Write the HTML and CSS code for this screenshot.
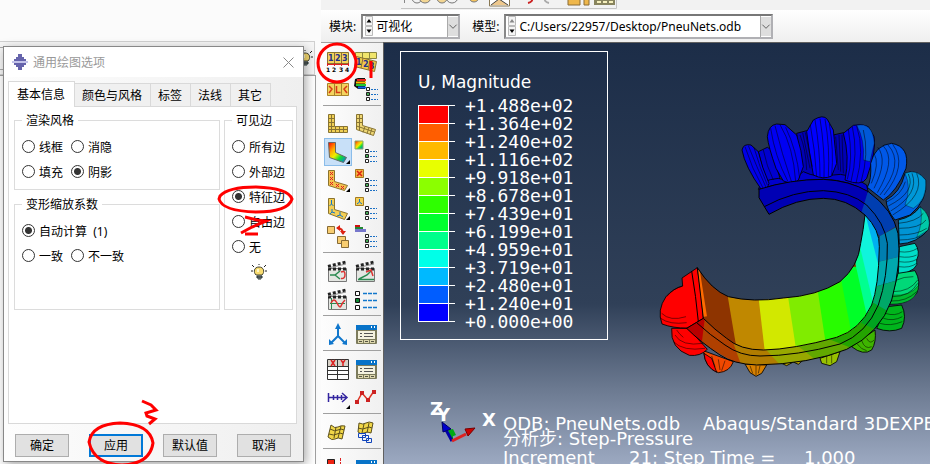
FILE: index.html
```html
<!DOCTYPE html>
<html lang="zh-CN">
<head>
    <meta charset="UTF-8">
    <meta name="viewport" content="width=device-width, initial-scale=1.0">
    <title>Abaqus/CAE</title>
    <link rel="stylesheet" href="styles.css">
</head>
<body>
    <!-- shared icon parts -->
    <svg class="defs" width="0" height="0">
        <symbol id="bulb" viewBox="0 0 16 16">
            <path d="M1 1l2 2M15 1l-2 2M8 0v1M0 7h2M14 7h2" stroke="#222" fill="none"/>
            <path d="M5 11C2 8 3 3 8 3s6 5 3 8z" fill="#f8dc70" stroke="#443"/>
            <path d="M6 5h2v3H6z" fill="#fff8c8"/>
            <path d="M6 12h5v2H6zM7 15h3" fill="#777" stroke="#233"/>
        </symbol>
        <symbol id="opts" viewBox="0 0 12 14">
            <path d="M.5 .5h3v3h-3zM.5 10.5h3v3h-3z" fill="#fff" stroke="#222"/>
            <path d="M.5 5.5h3v3h-3z" fill="#4a5" stroke="#222"/>
            <path d="M5 2.5h7M5 7.5h7M5 12.5h7" stroke="#1a6fc4" stroke-dasharray="2 1"/>
        </symbol>
        <symbol id="clap" viewBox="0 0 24 24">
            <path d="M3.500 9.500h18v13h-18z" fill="#e4e6e2" stroke="#777"/>
            <path d="M3 7.500L21 3M3 10h19" stroke="#222" stroke-width="3" stroke-dasharray="3 2"/>
            <path d="M3 9L21 5" stroke="#888"/>
        </symbol>
        <symbol id="win" viewBox="0 0 24 24">
            <rect x="2" y="3" width="21" height="19" rx="1" fill="#7c7b5c"/>
            <path d="M2 3h21v5H2z" fill="#0873c8"/>
            <path d="M17 5h1M20 5h1" stroke="#fff" stroke-width="2"/>
            <path d="M4 9h17v8H4z" fill="#f4f2df"/>
            <path d="M6 11.500h2M6 14.500h2M10 11.500h9M10 14.500h9" stroke="#555"/>
            <path d="M4 18h5v3H4zM10 18h5v3h-5zM16 18h5v3h-5z" fill="#ddd7ad"/>
            <path d="M5 19.500h3M11 19.500h3M17 19.500h3" stroke="#554"/>
        </symbol>
        <symbol id="mesh" viewBox="0 0 24 24">
            <path d="M3.500 3.500h6v12h13v6h-19z" fill="#f0cf54" stroke="#887433"/>
            <path d="M6.500 3.500v18M3.500 7.500h6M3.500 11.500h6M3.500 15.500h6M3.500 18.500h19M10.500 15.500v6M14.500 15.500v6M18.500 15.500v6" stroke="#887433" fill="none"/>
        </symbol>
        <linearGradient id="rainbow" x1="0" y1="0" x2="1" y2="1">
            <stop offset="0" stop-color="#f00"/>
            <stop offset=".3" stop-color="#fa0"/>
            <stop offset=".5" stop-color="#ee0"/>
            <stop offset=".7" stop-color="#1d3"/>
            <stop offset="1" stop-color="#06f"/>
        </linearGradient>
    </svg>

    <div class="app">
        <div class="side">
            <div class="side-bar">
                <span class="side-field"></span>
                <svg class="bulb" width="16" height="16"><use href="#bulb"/></svg>
            </div>
            <div class="side-tree"></div>
        </div>

        <div class="work">
            <div class="toolbar">
                <svg width="216" height="10" viewBox="0 0 216 10">
                    <path d="M0 8.500h215.500V0" fill="none" stroke="#c4c4c4"/>
                    <g fill="#f2f2f2" stroke="#777">
                        <circle cx="16" cy="-2" r="5"/><circle cx="24" cy="-3" r="6" fill="#f3d693"/>
                        <circle cx="41" cy="-2" r="5" fill="#f3d693"/><circle cx="51" cy="-3" r="6"/>
                        <circle cx="73" cy="-3" r="5" fill="#f5c35c"/>
                    </g>
                    <path d="M3.500 0v3" stroke="#888"/>
                    <path d="M88.500-2h20v8h-20z" fill="#fff" stroke="#887854"/>
                    <path d="M90 5l8-6 9 6" fill="#eec88d" stroke="#444"/>
                    <path d="M127 3q5-1 4-5" fill="none" stroke="#c22" stroke-width="2"/>
                    <path d="M148 3q-5-1-4-5" fill="none" stroke="#aaa" stroke-width="2"/>
                    <path d="M167-1h12v6h-12zM183-1h5v6h-5z" fill="#efb74b" stroke="#8b6c36"/>
                    <path d="M193-1h21v6h-21z" fill="#88845e"/>
                    <path d="M196 2h4M202 2h4M208 2h4" stroke="#f6f0bd" stroke-width="2"/>
                </svg>
            </div>

            <div class="context">
                <label for="module">模块:</label>
                <div class="combo combo-module">
                    <svg class="stepper" width="8" height="20" viewBox="0 0 8 20"><path d="M.5 .5h7v9h-7zM.5 10.500h7v9h-7z" fill="#f4f4f4" stroke="#bbb"/><path d="M1.500 6.500L4 3l2.500 3.500zM1.500 13.500L4 17l2.500-3.500z"/></svg>
                    <select id="module"><option>可视化</option></select>
                    <svg class="arrow" width="11" height="21" viewBox="0 0 11 21"><path d="M0 0h11v21H0z" fill="#dedede"/><path d="M1.500 8.500l4 4 4-4" fill="none" stroke="#555"/></svg>
                </div>
                <label for="model">模型:</label>
                <div class="combo combo-model">
                    <svg class="stepper" width="8" height="20" viewBox="0 0 8 20"><path d="M.5 .5h7v9h-7zM.5 10.500h7v9h-7z" fill="#f4f4f4" stroke="#bbb"/><path d="M1.500 6.500L4 3l2.500 3.500z" fill="#888"/><path d="M1.500 13.500L4 17l2.500-3.500z"/></svg>
                    <select id="model"><option>C:/Users/22957/Desktop/PneuNets.odb</option></select>
                    <svg class="arrow" width="11" height="21" viewBox="0 0 11 21"><path d="M0 0h11v21H0z" fill="#dedede"/><path d="M1.500 8.500l4 4 4-4" fill="none" stroke="#555"/></svg>
                </div>
            </div>

            <div class="main">
                <div class="toolbox">
                    <div class="tools">
                        <button class="tool" type="button" aria-label="图1">
                            <svg viewBox="0 0 24 24"><path d="M1.500 3.500h21v11h-21z" fill="#f4d35e" stroke="#8b742f"/><path d="M8.500 3v11M15.500 3v11" stroke="#8b742f"/><path d="M1 15.500h22M1.500 14v3M8.500 14v3M15.500 14v3M22.500 14v3" stroke="#d22"/><g class="num" fill="#24308c"><text x="2" y="12">1</text><text x="9" y="12">2</text><text x="16" y="12">3</text></g><g class="num-s"><text x="0" y="23">1</text><text x="6" y="23">2</text><text x="13" y="23">3</text><text x="19" y="23">4</text></g></svg>
                        </button>
                        <button class="tool" type="button" aria-label="图2">
                            <svg viewBox="0 0 24 24"><path d="M1.500 3.500h21v6h-21zM8.500 3v6M15.500 3v6" fill="#f1e56c" stroke="#8b8640"/><path d="M2.500 7.500l20 5-2 10-20-5z" fill="#f2c94a" stroke="#8b742f"/><path d="M9 9l-2 10M16 11l-2 10" stroke="#8b742f"/><g class="num" fill="#24308c"><text x="2" y="16">1</text><text x="9" y="18">2</text><text x="15" y="20">3</text></g></svg>
                        </button>
                        <button class="tool" type="button" aria-label="图3">
                            <svg viewBox="0 0 24 24"><path d="M1.500 6.500h21v12h-21zM8.500 6v12M15.500 6v12" fill="#f4d35e" stroke="#a8832b"/><path d="M3 9l3 3-3 4M10.500 9v6.500h4M21 9l-3 3 3 4" fill="none" stroke="#d63a16" stroke-width="1.500"/></svg>
                        </button>
                        <button class="tool" type="button" aria-label="图4">
                            <svg viewBox="0 0 24 24"><path d="M1 2l3-1h7v11H4L0 9z" fill="#111"/><path d="M3 3h9" stroke="#e22" stroke-width="2"/><path d="M2 5.500h10" stroke="#fb0" stroke-width="2"/><path d="M2 8h10" stroke="#2c3" stroke-width="2"/><path d="M4 10.500h8" stroke="#16e" stroke-width="2"/><use href="#opts" x="12" y="10" width="12" height="14"/></svg>
                        </button>
                    </div>
                    <div class="tools">
                        <button class="tool" type="button" aria-label="图5"><svg viewBox="0 0 24 24"><use href="#mesh" x="-1" y="-1" width="24" height="24"/></svg></button>
                        <button class="tool" type="button" aria-label="图6">
                            <svg viewBox="0 0 24 24"><path d="M2.500 2.500h6v11l13 4-2 6-17-6z" fill="#efd774" stroke="#887433"/><path d="M5.500 2.500v16M2.500 6.500h6M2.500 10.500h6M2.500 14l18 6M11 14.500l-2 6M15 15.500l-2 6M18 16.500l-2 6" stroke="#887433" fill="none"/></svg>
                        </button>
                        <button class="tool active" type="button" aria-label="图7">
                            <svg viewBox="0 0 24 24"><path d="M2.500 2.500h7v10l11 5-3 5-14-5z" fill="url(#rainbow)" stroke="#666"/><path d="M24 20v4h-4z"/></svg>
                        </button>
                        <button class="tool" type="button" aria-label="图8">
                            <svg viewBox="0 0 24 24"><path d="M1 1h8v8H1z" fill="url(#rainbow)" stroke="#8a6"/><use href="#opts" x="11" y="9" width="12" height="14"/></svg>
                        </button>
                        <button class="tool" type="button" aria-label="图9">
                            <svg viewBox="0 0 24 24"><path d="M2.500 2.500h6v11l13 4-3 5-16-5z" fill="#f4c14e" stroke="#8b742f"/><path d="M4 4l3 3M7 4L4 7M4 9l3 3M7 9l-3 3M4 14l3 3M7 14l-3 3M10 16l3 3M13 16l-3 3M15 18l3 3M18 18l-3 3" stroke="#d22"/><path d="M24 20v4h-4z"/></svg>
                        </button>
                        <button class="tool" type="button" aria-label="图10">
                            <svg viewBox="0 0 24 24"><path d="M1.500 1.500h8v8h-8z" fill="#f6b544" stroke="#a47a20"/><path d="M3 3l5 5M8 3L3 8" stroke="#d21" stroke-width="1.500"/><use href="#opts" x="11" y="10" width="12" height="14"/></svg>
                        </button>
                        <button class="tool" type="button" aria-label="图11">
                            <svg viewBox="0 0 24 24"><path d="M2.500 2.500h6v11l13 4-3 6-16-6z" fill="#f4cf55" stroke="#8b742f"/><path d="M5.500 4v4l-2 2M5.500 8l2 2M6 13v3l-2 2M6 16l3 1M14 16v3l-3 1M14 19l3 2" stroke="#17c" fill="none"/><path d="M24 20v4h-4z"/></svg>
                        </button>
                        <button class="tool" type="button" aria-label="图12">
                            <svg viewBox="0 0 24 24"><path d="M1.500 1.500h8v8h-8z" fill="#f4cf55" stroke="#a47a20"/><path d="M5.500 3v3L3 8M5.500 6L8 8" stroke="#17c" fill="none"/><use href="#opts" x="11" y="10" width="12" height="14"/></svg>
                        </button>
                        <button class="tool" type="button" aria-label="图13">
                            <svg viewBox="0 0 24 24"><g fill="#f8cd70" stroke="#866a34"><path d="M1.500 2.500h7v7h-7zM11.500 12.500h8v7h-8z"/><path d="M15.500 16.500h7v7h-7z"/></g><path d="M11 4q6 0 6 6" fill="none" stroke="#d21" stroke-width="2"/><path d="M10 4l4-3v6zM17 11l-3-4h6z" fill="#d21"/></svg>
                        </button>
                        <button class="tool" type="button" aria-label="图14">
                            <svg viewBox="0 0 24 24"><path d="M1 1h5v2H1z" fill="#c11"/><path d="M1 3h8v2H1z" fill="#283"/><path d="M1 5h11v3H1z" fill="#77c"/><use href="#opts" x="11" y="10" width="12" height="14"/></svg>
                        </button>
                    </div>
                    <div class="tools">
                        <button class="tool" type="button" aria-label="图15">
                            <svg viewBox="0 0 24 24"><use href="#clap" x="-1" width="24" height="24"/><path d="M4 16h5l5-4M9 16l5 4" fill="none" stroke="#2a8a50" stroke-width="1.500"/><path d="M15 13q4-2 4 2.500t-4 4" fill="none" stroke="#d33" stroke-width="1.500"/></svg>
                        </button>
                        <button class="tool" type="button" aria-label="图16">
                            <svg viewBox="0 0 24 24"><use href="#clap" x="-1" width="24" height="24"/><path d="M4 20.500h16M5 20l8-4 4-4" fill="none" stroke="#2a8a50" stroke-width="1.500"/><path d="M12 13l5-2 2 6" fill="none" stroke="#d33" stroke-width="1.500"/></svg>
                        </button>
                        <button class="tool" type="button" aria-label="图17">
                            <svg viewBox="0 0 24 24"><use href="#clap" x="-1" width="24" height="24"/><path d="M5.500 11v11M4 16.500h15" stroke="#2a8a50"/><path d="M5 16q3-6 6 0t4 3 4-6" fill="none" stroke="#d33" stroke-width="1.500"/></svg>
                        </button>
                        <button class="tool" type="button" aria-label="图18">
                            <svg viewBox="0 0 24 24"><path d="M1.500 4.500h4v4h-4zM1.500 18.500h4v4h-4z" fill="#fff" stroke="#111"/><path d="M1.500 11.500h4v4h-4z" fill="#183" stroke="#111"/><path d="M9 6.500h15M9 13.500h15M9 20.500h15" stroke="#17c" stroke-width="1.500" stroke-dasharray="4 1"/></svg>
                        </button>
                    </div>
                    <div class="tools">
                        <button class="tool" type="button" aria-label="图19">
                            <svg viewBox="0 0 24 24"><path d="M12 5v9l-7 7M12 14l7 7" fill="none" stroke="#17c" stroke-width="2"/><path d="M12 1l3 6H9zM3 23v-6l5 5zM21 23v-6l-5 5z" fill="#17c"/></svg>
                        </button>
                        <button class="tool" type="button" aria-label="图20"><svg viewBox="0 0 24 24"><use href="#win" width="24" height="24"/></svg></button>
                    </div>
                    <div class="tools">
                        <button class="tool" type="button" aria-label="图21">
                            <svg viewBox="0 0 24 24"><path d="M1.500 2.500h21v20h-21z" fill="#fff" stroke="#333"/><path d="M2 3h20v6H2z" fill="#d8d2c8"/><path d="M1.500 9.500h21M1.500 13.500h21M1.500 17.500h21M11.500 3v20" stroke="#333"/><path d="M5 3l4 6M9 3L5 9M15 3l2 3 2-3M17 6v3" fill="none" stroke="#d22" stroke-width="1.500"/></svg>
                        </button>
                        <button class="tool" type="button" aria-label="图22"><svg viewBox="0 0 24 24"><use href="#win" width="24" height="24"/></svg></button>
                        <button class="tool" type="button" aria-label="图23">
                            <svg viewBox="0 0 24 24"><path d="M2.500 8v9M7.500 10v5M11.500 10v5M15.500 10v5M2 12.500h18M16 8l5 4.500-5 4.500" fill="none" stroke="#3426a0" stroke-width="1.500"/><path d="M24 20v4h-4z"/></svg>
                        </button>
                        <button class="tool" type="button" aria-label="图24">
                            <svg viewBox="0 0 24 24"><path d="M3 17l5-9 6 7 6-9" fill="none" stroke="#d32" stroke-width="1.500"/><path d="M1 15h4v4H1zM6 6h4v4H6zM12 13h4v4h-4zM18 5h4v4h-4z" fill="#c22"/></svg>
                        </button>
                    </div>
                    <div class="tools">
                        <button class="tool" type="button" aria-label="图25">
                            <svg viewBox="0 0 24 24"><path d="M5 5q4 4 7 2t7-1l-3 13q-4-2-7 0t-7-2z" fill="#f0d648" stroke="#5c501c"/><path d="M10 7L8 18M15 6l-3 12M4 9q5 3 8 1t6 0M3 14q5 2 8 0t6 0" fill="none" stroke="#5c501c"/></svg>
                        </button>
                        <button class="tool" type="button" aria-label="图26">
                            <svg viewBox="0 0 24 24"><path d="M5 3q4 2 7 0t7 0l-2 10q-4-2-7 0t-6-1z" fill="#f0d648" stroke="#5c501c"/><path d="M10 4L8 13M15 3l-2 10M4 8q5 2 8 0t6 0" fill="none" stroke="#5c501c"/><path d="M4.500 13.500h7v4h-7zM8.500 15.500h6v5h-6zM12.500 18.500h5v4h-5z" fill="none" stroke="#14b"/></svg>
                        </button>
                    </div>
                    <div class="tools">
                        <button class="tool" type="button" aria-label="图27"><svg viewBox="0 0 24 24"><path d="M1.500 4.500h7v15h-7z" fill="#e21" stroke="#222"/><path d="M14.500 3v20" stroke="#d22" stroke-dasharray="3 1"/></svg></button>
                        <button class="tool" type="button" aria-label="图28"><svg viewBox="0 0 24 24"><use href="#win" y="2" width="24" height="24"/></svg></button>
                    </div>
                </div>

                <div class="viewport">
                    <div class="legend">
                        <div class="legend-title">U, Magnitude</div>
                        <div class="legend-scale">
                            <div class="bands">
                                <i class="c1"></i><i class="c2"></i><i class="c3"></i><i class="c4"></i><i class="c5"></i><i class="c6"></i>
                                <i class="c7"></i><i class="c8"></i><i class="c9"></i><i class="c10"></i><i class="c11"></i><i class="c12"></i>
                            </div>
                            <ul class="values">
                                <li>+1.488e+02</li>
                                <li>+1.364e+02</li>
                                <li>+1.240e+02</li>
                                <li>+1.116e+02</li>
                                <li>+9.918e+01</li>
                                <li>+8.678e+01</li>
                                <li>+7.439e+01</li>
                                <li>+6.199e+01</li>
                                <li>+4.959e+01</li>
                                <li>+3.719e+01</li>
                                <li>+2.480e+01</li>
                                <li>+1.240e+01</li>
                                <li>+0.000e+00</li>
                            </ul>
                        </div>
                    </div>

                    <!-- deformed actuator -->
                    <svg class="model" viewBox="0 0 840 870" stroke-linejoin="round">
                        <defs>
                            <clipPath id="inner"><path d="M142 503Q185 570 235 590Q310 608 400 594Q500 588 570 545Q625 500 632 430Q640 390 645 345Q690 390 688 440Q686 560 665 615Q630 690 560 712Q430 748 340 750Q270 750 230 715Q195 690 160 655Z"/></clipPath>
                            <clipPath id="rim"><path d="M327 268Q420 238 520 238Q600 242 655 275Q730 330 744 400Q755 490 725 600Q690 700 590 748Q480 792 320 795Q250 792 210 765Q150 725 110 685L160 655Q195 690 230 715Q270 750 340 750Q430 748 560 712Q630 690 665 615Q686 560 688 440Q690 390 645 345Q590 295 520 295Q440 295 357 343L327 293Z"/></clipPath>
                        </defs>

                        <g stroke="#000" stroke-width="2.500">
                            <!-- blue chambers -->
                            <path d="M325 155L352 142 365 150 390 235 350 250z" fill="#0000d0"/>
                            <path d="M440 100L470 92 495 110V230H450z" fill="#0000b4"/>
                            <path d="M550 105L580 98 610 110 600 250H545z" fill="#0000b4"/>
                            <path d="M325 268Q330 240 385 235Q420 250 460 215Q500 235 550 225Q590 215 650 255L655 278Q600 240 520 238Q420 240 325 268z" fill="#0000cc"/>
                            <path d="M276 150Q280 130 303 135L325 155Q335 200 357 250L350 268L335 270Q285 200 276 150z" fill="#0000e8"/>
                            <path d="M352 110Q355 75 380 72L405 74L440 105Q455 150 460 200L445 240Q430 255 400 243L378 205Q355 140 352 110z" fill="#0000f2"/>
                            <path d="M470 95L490 60Q520 42 532 58L550 90Q556 150 560 190L545 228Q520 240 490 225Q478 160 470 95z" fill="#0000ff"/>
                            <path d="M580 100L610 76Q635 70 655 80L672 110Q680 150 650 235Q635 260 585 240Q600 170 580 100z" fill="#0000ee"/>
                            <path d="M620 76Q668 65 673 130L660 185L640 180Q645 120 620 76z" fill="#0058d8" stroke-width="1"/>
                            <path d="M662 190Q675 135 725 130Q780 140 768 205Q740 275 700 300L652 262Q665 240 662 190z" fill="#0058e8"/>
                            <path d="M765 220Q800 205 827 240Q835 300 780 345L735 360Q710 330 708 300Q750 280 765 220z" fill="#0060e0"/>
                            <path d="M765 220Q800 205 827 240Q832 300 790 325L765 315Q785 260 765 220z" fill="#0098d8" stroke-width="1"/>
                            <path d="M745 360Q790 350 810 320Q848 350 834 390Q800 430 748 432z" fill="#0094d4"/>
                            <path d="M812 322Q848 350 834 390L800 412Q820 370 812 322z" fill="#00c8a8" stroke-width="1"/>
                            <path d="M748 440L795 430Q812 455 800 480Q810 510 745 525z" fill="#00dcc8"/>
                            <path d="M744 520L795 512Q815 545 800 580Q770 615 720 612z" fill="#00d878"/>
                            <path d="M728 585Q780 590 806 556Q800 615 720 612z" fill="#00b830" stroke-width="1"/>
                            <path d="M712 620L755 615Q772 650 755 685Q720 700 680 685z" fill="#00b41c"/>
                            <path d="M640 715L675 690Q680 725 665 750Q640 768 605 740z" fill="#3eb400"/>
                            <path d="M510 775L570 755 560 785 540 797 515 790z" fill="#98c000"/>
                            <path d="M395 790L460 780 445 793 430 786 410 797z" fill="#b8a000"/>
                            <path d="M285 792L350 795 335 820 318 829 300 818z" fill="#d88000"/>
                            <path d="M160 752L250 785Q240 815 205 818Q165 805 160 752z" fill="#f04800"/>
                            <path d="M162 760L185 775 200 817Q165 800 162 760z" fill="#f00"/>
                            <path d="M65 685L115 685 172 748Q150 770 118 766Q60 745 65 685z" fill="#f00"/>
                            <path d="M96 534L142 503Q155 580 160 655L112 684Q70 685 36 672Q20 630 48 590Q70 565 98 558z" fill="#f00"/>
                        </g>

                        <g fill="none" stroke="#000" stroke-width="1.500">
                            <path d="M285 140Q305 205 340 266M295 137Q320 200 348 262M312 143Q330 205 352 255M340 150Q350 200 370 240"/>
                            <path d="M362 85Q375 170 413 243M375 77Q395 160 425 247M390 74Q430 140 437 245M407 82Q440 150 449 235"/>
                            <path d="M450 105Q468 150 470 210M458 98L480 205M466 97L487 200M481 75Q495 150 500 230M495 60Q510 150 510 230M510 56Q525 150 522 232M525 57Q540 140 535 230M538 72Q552 150 545 225"/>
                            <path d="M557 110L565 210M567 105L572 215M576 105L580 220M595 87Q610 180 592 238M607 80Q625 160 603 245M620 78Q645 150 618 250M640 90Q658 160 633 246"/>
                            <path d="M672 160Q690 190 664 250M683 142Q715 180 672 265M700 138Q740 180 682 278M714 135Q765 190 690 285M728 133Q775 195 702 285"/>
                            <path d="M775 222Q800 275 715 318M786 220Q810 280 722 333M800 220Q828 285 728 345M766 245Q755 285 708 307"/>
                            <path d="M745 370Q800 365 820 340M748 385Q810 385 828 360M748 405Q800 405 830 385M748 420Q800 420 825 400"/>
                            <path d="M748 455Q780 460 802 445M748 470Q780 475 800 465M748 485Q780 490 800 478M747 500Q780 505 800 490"/>
                            <path d="M740 540Q760 530 790 530M728 590Q780 590 803 550M728 575Q780 575 803 540M722 603Q770 605 800 575"/>
                            <path d="M706 640Q735 650 757 635M700 655Q730 665 757 650M690 670Q720 680 757 665M650 715Q660 735 672 720M635 722Q645 750 665 740M620 730Q635 750 650 752"/>
                            <path d="M530 770V790M545 765V790M300 797L308 820M318 797V825M330 797L325 820M185 768L195 800M205 778L210 810M225 782L215 812"/>
                            <path d="M35 640Q60 665 108 650M32 655Q60 675 110 668M50 590Q70 565 98 558M75 705Q95 740 160 730M70 725Q100 755 165 745M80 690Q90 705 100 712"/>
                        </g>

                        <g clip-path="url(#rim)">
                            <path d="M300 200H665L640 350 300 360z" fill="#0000b4"/>
                            <path d="M665 240L760 250 760 365 690 408 630 350z" fill="#003eb0"/>
                            <path d="M690 408L760 370V467L680 487z" fill="#007eb0"/>
                            <path d="M680 487L760 467V535L670 562z" fill="#00a8ae"/>
                            <path d="M670 562L760 535 720 640 655 600z" fill="#00a868"/>
                            <path d="M655 600L725 640 685 700 615 660z" fill="#00a420"/>
                            <path d="M615 660L690 695 610 760 530 715z" fill="#24a400"/>
                            <path d="M530 715L620 750 500 800 440 735z" fill="#62a800"/>
                            <path d="M440 735L510 790 385 805 340 740z" fill="#98a800"/>
                            <path d="M340 740L395 800 270 805 245 720z" fill="#b07c00"/>
                            <path d="M245 715L275 800 155 730 155 640z" fill="#b04000"/>
                            <path d="M165 650L155 732 100 685z" fill="#b80000"/>
                        </g>

                        <g clip-path="url(#inner)">
                            <path d="M130 490H720V780H150z" fill="#8e3400"/>
                            <path d="M230 570L262 760H720V570z" fill="#c08800"/>
                            <path d="M323 570L345 760H720V570z" fill="#d2e800"/>
                            <path d="M408 550L440 760H720V550z" fill="#80ec00"/>
                            <path d="M497 530L530 750H720V530z" fill="#28fc00"/>
                            <path d="M566 500L612 740H720V500z" fill="#00ff28"/>
                            <path d="M605 440L660 690H720V440z" fill="#00ff90"/>
                            <path d="M620 320L630 440 672 620H720V320z" fill="#10f4dc"/>
                            <path d="M640 320L684 490H720V320z" fill="#00b0f0"/>
                            <path d="M142 503L165 650" stroke="#ff6a00" stroke-width="12"/>
                        </g>

                        <g fill="none" stroke="#000" stroke-width="3">
                            <path d="M142 503Q185 570 235 590Q310 608 400 594Q500 588 570 545Q625 500 632 430Q640 390 645 345M142 503L160 655M125 513Q138 590 145 665"/>
                            <path d="M357 343Q440 295 520 295Q590 295 645 345Q690 390 688 440Q686 560 665 615Q630 690 560 712Q430 748 340 750Q270 750 230 715Q195 690 160 655L110 685Q150 725 210 765Q250 792 320 795Q480 792 590 748Q690 700 725 600Q755 490 744 400Q730 330 655 275Q600 242 520 238Q420 238 327 268V293z"/>
                            <path d="M343 320Q430 272 520 272Q600 275 650 315Q705 370 712 430Q714 530 685 615Q650 700 570 732Q440 768 330 768Q270 768 225 735Q180 705 140 668"/>
                        </g>
                    </svg>

                    <!-- view triad -->
                    <svg class="triad" width="80" height="52" viewBox="0 0 80 52">
                        <path d="M22 40L20 29" stroke="#080" stroke-width="3"/>
                        <path d="M18 29l5-1 3 6-5 2z" fill="#0a1"/>
                        <path d="M22 40L15 27" stroke="#00a" stroke-width="3"/>
                        <path d="M12 21l9 7-8 3z" fill="#00c" stroke="#006"/>
                        <path d="M22 40l14-7" stroke="#d22" stroke-width="3"/>
                        <path d="M35 28l10-1-7 8z" fill="#c00" stroke="#700"/>
                        <text x="0" y="14">Z</text>
                        <text x="7" y="20">Y</text>
                        <text x="52" y="25">X</text>
                    </svg>

                    <div class="state">
                        <p>ODB: PneuNets.odb    Abaqus/Standard 3DEXPERIENCE R2018x</p>
                        <p>分析步: Step-Pressure</p>
                        <p class="frame">Increment      21: Step Time =     1.000</p>
                    </div>
                </div>
            </div>
        </div>
    </div>

    <form class="dialog">
        <div class="title">
            <svg width="16" height="16" viewBox="0 0 16 16"><path d="M6 0h4v3h2v2h2v2h2v2h-2v2h-2v2h-2v3H6v-3H4v-2H2V9H0V7h2V5h2V3h2z" fill="#6664ac"/><path d="M0 8h16" stroke="#e4e4ff" stroke-width="1.500"/></svg>
            <span>通用绘图选项</span>
            <button class="close" type="button" aria-label="关闭"><svg width="11" height="11" viewBox="0 0 11 11"><path d="M.5 .5l10 10M10.500 .5l-10 10" stroke="#888"/></svg></button>
        </div>
        <div class="dialog-body">
            <div class="tabs">
                <button class="tab selected" type="button">基本信息</button>
                <button class="tab" type="button">颜色与风格</button>
                <button class="tab" type="button">标签</button>
                <button class="tab" type="button">法线</button>
                <button class="tab" type="button">其它</button>
            </div>
            <div class="panel">
                <div class="groups">
                    <fieldset>
                        <legend>渲染风格</legend>
                        <div class="row">
                            <label><input type="radio" name="style">线框</label>
                            <label><input type="radio" name="style">消隐</label>
                        </div>
                        <div class="row">
                            <label><input type="radio" name="style">填充</label>
                            <label><input type="radio" name="style" checked>阴影</label>
                        </div>
                    </fieldset>
                    <fieldset class="grow">
                        <legend>变形缩放系数</legend>
                        <div class="row">
                            <label><input type="radio" name="scale" checked>自动计算&nbsp; (1)</label>
                        </div>
                        <div class="row">
                            <label><input type="radio" name="scale">一致</label>
                            <label><input type="radio" name="scale">不一致</label>
                        </div>
                    </fieldset>
                </div>
                <fieldset class="edges">
                    <legend>可见边</legend>
                    <div class="row"><label><input type="radio" name="edges">所有边</label></div>
                    <div class="row"><label><input type="radio" name="edges">外部边</label></div>
                    <div class="row"><label><input type="radio" name="edges" checked>特征边</label></div>
                    <div class="row"><label><input type="radio" name="edges">自由边</label></div>
                    <div class="row"><label><input type="radio" name="edges">无</label></div>
                    <div class="row tip"><svg width="16" height="16"><use href="#bulb"/></svg></div>
                </fieldset>
            </div>
            <div class="actions">
                <button type="button">确定</button>
                <button type="button" class="default">应用</button>
                <button type="button">默认值</button>
                <button type="button">取消</button>
            </div>
        </div>
    </form>

    <!-- red pen marks -->
    <svg class="marks" width="400" height="464" viewBox="0 0 400 464">
        <ellipse cx="337" cy="63" rx="19" ry="19"/>
        <path d="M371 61v17"/>
        <path d="M220 196Q228 187 256 187Q288 188 292 199Q288 212 256 212Q222 211 219 199z"/>
        <path d="M245 217l12 3 9 1-14 6-11 6M245 234h13"/>
        <path d="M89 442Q92 424 120 423Q150 424 153 443Q150 464 122 465Q94 464 89 442z"/>
        <path d="M142 401l9 4 5 5-10 3 1 3 8 3-6 5"/>
    </svg>
</body>
</html>
```
FILE: styles.css
```css
* {
    box-sizing: border-box;
}
body {
    margin: 0;
    height: 100vh;
    overflow: hidden;
    position: relative;
    background: #fcfcfc;
    color: #000;
    font-family: "Noto Sans", "Noto Sans CJK SC", sans-serif;
    font-size: 12px;
}
button, select, input {
    font: inherit;
    color: inherit;
    margin: 0;
}
.defs {
    position: absolute;
}
.app {
    display: flex;
    height: 100%;
}

/* left side, mostly behind the dialog */
.side {
    flex: 0 0 321px;
    display: flex;
    flex-direction: column;
    padding-top: 41px;
    background: #fbfbfb;
}
.side-bar {
    height: 34px;
    margin-right: 6px;
    display: flex;
    align-items: center;
    justify-content: space-between;
    border: 1px solid #d0d0d0;
    border-left: 0;
    background: #f6f6f6;
}
.side-field {
    width: 4px;
    height: 23px;
    border: 1px solid #aaa;
    border-left: 0;
}
.bulb {
    margin-right: 1px;
}
.side-tree {
    flex: 1;
    margin-right: 5px;
    border: 1px solid #a0a0a0;
    border-width: 1px 1px 0 0;
    background: #fff;
}

.work {
    flex: 1;
    min-width: 0;
    display: flex;
    flex-direction: column;
}
.toolbar {
    height: 10px;
    padding-left: 80px;
    background: #f2f2f2;
}
.toolbar svg {
    display: block;
}
.context {
    height: 32px;
    display: flex;
    align-items: center;
    padding-left: 8px;
    background: linear-gradient(#fff, #efefef);
}
.combo {
    height: 25px;
    display: flex;
    align-items: center;
    margin: 0 12px 0 5px;
    padding-left: 2px;
    border: 2px solid #b0b0b4;
    border-top-color: #777;
    border-left-color: #888;
    background: #fff;
}
.combo-module {
    width: 99px;
}
.combo-model {
    width: 269px;
}
.combo select {
    flex: 1;
    min-width: 0;
    height: 21px;
    padding: 0 0 0 3px;
    border: 0;
    background: none;
    appearance: none;
    outline: none;
}
.arrow {
    border-left: 1px solid #aaa;
}

.main {
    flex: 1;
    min-height: 0;
    display: flex;
}
.toolbox {
    flex: 0 0 62px;
    padding: 0 2px;
    overflow: hidden;
    background: linear-gradient(90deg, #fdfdfd, #f0f0f0);
    border-top: 1px solid #a0a0a0;
}
.tools {
    display: grid;
    grid-template-columns: 28px 28px;
    padding: 4px 1px 2px;
    border-bottom: 1px solid #a0a0a0;
}
.tool {
    width: 28px;
    height: 28px;
    padding: 2px;
    border: 0;
    background: none;
}
.tool svg {
    display: block;
    width: 24px;
    height: 24px;
    overflow: visible;
}
.tool.active {
    background: #c8e0f8;
    box-shadow: inset 0 0 0 1px #8bbdea;
}
.num {
    font: bold 8px "DejaVu Sans", sans-serif;
}
.num-s {
    font: bold 6px "DejaVu Sans", sans-serif;
}

.viewport {
    flex: 1;
    min-width: 0;
    position: relative;
    overflow: hidden;
    padding: 8px 0 0 16px;
    border: 1px solid #606060;
    border-width: 1px 0 0 1px;
    background: linear-gradient(#1c2d48, #304058 62%, #6b7990 82%, #9ca9c1);
    color: #fff;
    font-family: "DejaVu Sans", "Noto Sans CJK SC", sans-serif;
    font-size: 18px;
}
.legend {
    width: 208px;
    height: 289px;
    padding: 20px 0 0 17px;
    border: 1px solid #fff;
}
.legend-title {
    font-size: 17px;
    line-height: 20px;
}
.legend-scale {
    display: flex;
    padding-top: 5px;
}
.bands {
    width: 37px;
    margin-top: 8px;
}
.bands i {
    display: block;
    height: 18px;
    border-top: 1px solid #fff;
}
.bands i::before {
    content: "";
    display: block;
    width: 29px;
    height: 100%;
    border: 1px solid #fff;
    border-width: 0 1px;
    background: var(--band);
}
.bands i:last-child {
    height: 19px;
    border-bottom: 1px solid #fff;
}
.c1 { --band: #ff0000; }
.c2 { --band: #ff5d00; }
.c3 { --band: #ffb900; }
.c4 { --band: #e8ff00; }
.c5 { --band: #8bff00; }
.c6 { --band: #2eff00; }
.c7 { --band: #00ff2e; }
.c8 { --band: #00ff8b; }
.c9 { --band: #00ffe8; }
.c10 { --band: #00b9ff; }
.c11 { --band: #005dff; }
.c12 { --band: #0000ff; }
.values {
    margin: 0 0 0 10px;
    padding: 0;
    list-style: none;
    font-family: "DejaVu Sans Mono", monospace;
    line-height: 18px;
}
.model {
    position: absolute;
    left: 266px;
    top: 57px;
    width: 280px;
    height: 290px;
}
.triad {
    position: absolute;
    left: 46px;
    bottom: 11px;
    fill: #fff;
    font-size: 18px;
    font-weight: bold;
}
.state {
    position: absolute;
    left: 119px;
    bottom: -1px;
    line-height: 15px;
}
.state p {
    margin: 0;
    white-space: pre;
}
.state .frame {
    margin-top: 4px;
}

.dialog {
    position: absolute;
    left: 3px;
    top: 46px;
    width: 301px;
    border: 1px solid #888;
    background: linear-gradient(90deg, #fdfdfd, #efefef);
    box-shadow: 2px 3px 10px rgba(0,0,0,0.35);
}
.title {
    height: 30px;
    display: flex;
    align-items: center;
    gap: 5px;
    padding: 0 9px 0 8px;
    background: #fff;
    color: #999;
}
.close {
    margin-left: auto;
    padding: 0;
    border: 0;
    background: none;
    line-height: 0;
}
.dialog-body {
    padding: 4px 6px 4px 4px;
}
.tabs {
    display: flex;
    align-items: flex-end;
    height: 25px;
}
.tab {
    height: 23px;
    padding: 1px 8px 0 7px;
    border: 1px solid #d9d9d9;
    border-width: 1px 1px 0 0;
    background: #f0f0f0;
    line-height: 20px;
}
.tab.selected {
    height: 26px;
    margin-bottom: -1px;
    padding: 0 9px 0 8px;
    border-left-width: 1px;
    background: #fff;
    z-index: 1;
}
.panel {
    display: flex;
    align-items: flex-start;
    gap: 4px;
    min-height: 318px;
    padding: 6px 3px 0 5px;
    border: 1px solid #d9d9d9;
    background: #fff;
}
.groups {
    flex: 1;
    display: flex;
    flex-direction: column;
    gap: 7px;
}
fieldset {
    min-width: 0;
    margin: 0;
    padding: 7px 0 5px 7px;
    border: 1px solid #dcdcdc;
}
legend {
    padding: 2px 4px 0;
    line-height: 12px;
}
.grow {
    min-height: 113px;
}
.edges {
    width: 69px;
    min-height: 197px;
}
.row {
    height: 25px;
    display: flex;
    align-items: center;
    gap: 8px;
}
.row label {
    display: flex;
    align-items: center;
    gap: 4px;
    white-space: nowrap;
}
.tip {
    padding-left: 19px;
}
input[type="radio"] {
    appearance: none;
    width: 13px;
    height: 13px;
    border: 1px solid #333;
    border-radius: 50%;
    background: #fff;
}
input[type="radio"]:checked {
    background: radial-gradient(circle, #333 3px, #fff 4px);
}
.actions {
    display: flex;
    gap: 20px;
    padding: 10px 0 0 7px;
}
.actions button {
    width: 54px;
    height: 23px;
    padding: 0;
    border: 1px solid #adadad;
    background: #e1e1e1;
    line-height: 20px;
}
.actions .default {
    border: 2px solid #0078d7;
}
.marks {
    position: absolute;
    left: 0;
    top: 0;
    pointer-events: none;
    fill: none;
    stroke: #f00;
    stroke-width: 3;
}
```
